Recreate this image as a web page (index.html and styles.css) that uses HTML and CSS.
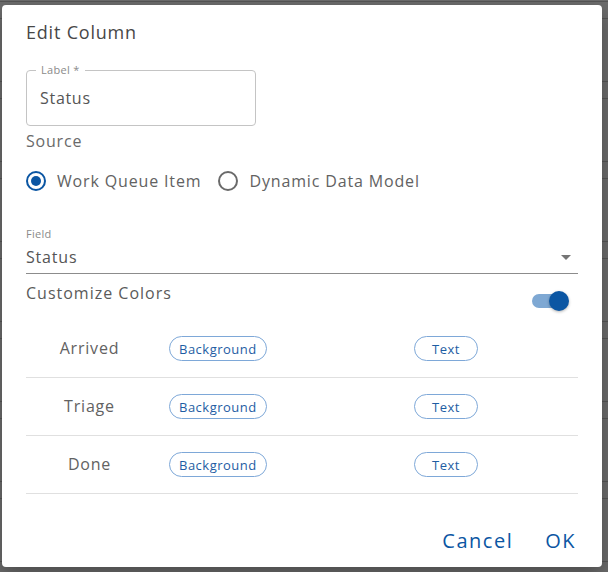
FILE: index.html
```html
<!DOCTYPE html>
<html lang="en">
<head>
<meta charset="utf-8">
<title>Edit Column</title>
<link rel="stylesheet" href="styles.css">
</head>
<body>
<div class="dialog">
  <h2 class="title">Edit Column</h2>
  <div class="content">
    <div class="outlined">
      <span class="notch-label">Label *</span>
      <span class="outlined-value">Status</span>
    </div>
    <div class="section-label">Source</div>
    <div class="radios">
      <label class="radio checked"><span class="dot"></span>Work Queue Item</label>
      <label class="radio"><span class="dot"></span>Dynamic Data Model</label>
    </div>
    <div class="select">
      <div class="select-label">Field</div>
      <div class="select-value">
        <span>Status</span>
        <svg class="arrow" viewBox="0 0 24 24" width="24" height="24"><path d="M7 10l5 5 5-5z"/></svg>
      </div>
    </div>
    <div class="customize">
      <span class="customize-label">Customize Colors</span>
      <span class="switch"><span class="track"></span><span class="thumb"></span></span>
    </div>
    <div class="color-table">
      <div class="row">
        <div class="cell-name">Arrived</div>
        <div class="cell-btn"><span class="pill">Background</span></div>
        <div class="cell-btn"><span class="pill">Text</span></div>
      </div>
      <div class="row">
        <div class="cell-name">Triage</div>
        <div class="cell-btn"><span class="pill">Background</span></div>
        <div class="cell-btn"><span class="pill">Text</span></div>
      </div>
      <div class="row">
        <div class="cell-name">Done</div>
        <div class="cell-btn"><span class="pill">Background</span></div>
        <div class="cell-btn"><span class="pill">Text</span></div>
      </div>
    </div>
  </div>
  <div class="actions">
    <span class="action">Cancel</span>
    <span class="action">OK</span>
  </div>
</div>
</body>
</html>
```
FILE: styles.css
```css
html, body {
  margin: 0;
  padding: 0;
}
body {
  width: 608px;
  height: 572px;
  overflow: hidden;
  background-color: #6c6c6c;
  background-image: repeating-linear-gradient(to bottom,
    transparent 0, transparent 1px,
    #555 1px, #555 2px,
    transparent 2px, transparent 18px,
    #555 18px, #555 19px,
    transparent 19px, transparent 80px);
  font-family: "Open Sans", "Noto Sans", sans-serif;
  color: #626262;
}
.dialog {
  box-sizing: border-box;
  width: 600px;
  height: 562px;
  margin: 5px 0 0 2px;
  background: #fff;
  border-radius: 4px;
  box-shadow: 0 8px 20px rgba(0,0,0,0.3);
  display: flex;
  flex-direction: column;
  padding: 11px 24px 0 24px;
}
.title {
  margin: 0;
  height: 32px;
  line-height: 32px;
  font-size: 18px;
  font-weight: 500;
  color: #474747;
  letter-spacing: 0.8px;
}
.content {
  display: flex;
  flex-direction: column;
}
.outlined {
  position: relative;
  box-sizing: border-box;
  width: 230px;
  height: 56px;
  margin-top: 22px;
  border: 1px solid #c4c4c4;
  border-radius: 4px;
  padding: 0 13px;
  display: flex;
  align-items: center;
}
.notch-label {
  position: absolute;
  left: 9px;
  top: -8px;
  padding: 0 5px;
  background: #fff;
  font-size: 11px;
  line-height: 14px;
  color: #8a8a8a;
  letter-spacing: 0.3px;
}
.outlined-value {
  font-size: 16px;
  line-height: 24px;
  color: #555;
  letter-spacing: 0.7px;
}
.section-label {
  height: 30px;
  line-height: 30px;
  font-size: 16px;
  letter-spacing: 0.8px;
  color: #6a6a6a;
}
.radios {
  display: flex;
  gap: 17px;
  height: 30px;
  margin-top: 10px;
  align-items: center;
}
.radio {
  display: flex;
  align-items: center;
  gap: 11px;
  font-size: 16px;
  letter-spacing: 0.85px;
  color: #626262;
}
.dot {
  box-sizing: border-box;
  width: 20px;
  height: 20px;
  border: 2px solid #6a6a6a;
  border-radius: 50%;
  display: flex;
  align-items: center;
  justify-content: center;
}
.radio.checked .dot {
  border-color: #0b56a3;
}
.radio.checked .dot::after {
  content: "";
  width: 10px;
  height: 10px;
  border-radius: 50%;
  background: #0b56a3;
}
.select {
  margin-top: 30px;
  display: flex;
  flex-direction: column;
}
.select-label {
  height: 15px;
  line-height: 15px;
  font-size: 11px;
  color: #8a8a8a;
  letter-spacing: 0.3px;
}
.select-value {
  height: 32px;
  display: flex;
  align-items: center;
  justify-content: space-between;
  border-bottom: 1px solid #8c8c8c;
  font-size: 16px;
  letter-spacing: 0.8px;
  color: #555;
}
.arrow {
  fill: #757575;
}
.customize {
  height: 30px;
  display: flex;
  justify-content: space-between;
  align-items: flex-start;
  margin-top: 4px;
}
.customize-label {
  height: 30px;
  line-height: 30px;
  font-size: 16px;
  letter-spacing: 1px;
  color: #5a5a5a;
}
.switch {
  position: relative;
  width: 37px;
  height: 20px;
  margin-top: 13px;
  margin-right: 9px;
}
.track {
  position: absolute;
  left: 0;
  top: 3px;
  width: 34px;
  height: 14px;
  border-radius: 7px;
  background: #7ea8d3;
}
.thumb {
  position: absolute;
  left: 17px;
  top: 0;
  width: 20px;
  height: 20px;
  border-radius: 50%;
  background: #0b56a3;
  box-shadow: 0 1px 3px rgba(0,0,0,0.3);
}
.color-table {
  margin-top: 12px;
  display: flex;
  flex-direction: column;
}
.row {
  display: grid;
  grid-template-columns: 127px 245px 1fr;
  align-items: center;
  height: 58px;
  box-sizing: border-box;
  border-bottom: 1px solid #e0e0e0;
}
.cell-name {
  text-align: center;
  font-size: 16px;
  letter-spacing: 0.8px;
  color: #626262;
  margin-top: -2px;
}
.cell-btn {
  padding-left: 16px;
  display: flex;
}
.pill {
  box-sizing: border-box;
  min-width: 64px;
  height: 25px;
  padding: 0 9px;
  border: 1px solid #7ea8d8;
  border-radius: 13px;
  display: inline-flex;
  align-items: center;
  justify-content: center;
  font-size: 13px;
  letter-spacing: 0.5px;
  color: #1e5da3;
}
.actions {
  margin-top: auto;
  height: 44px;
  display: flex;
  justify-content: flex-end;
  align-items: flex-start;
  gap: 16px;
  margin-right: -6px;
}
.action {
  padding: 0 8px;
  height: 36px;
  line-height: 36px;
  font-size: 20px;
  letter-spacing: 1.5px;
  color: #0b56a3;
}
```
